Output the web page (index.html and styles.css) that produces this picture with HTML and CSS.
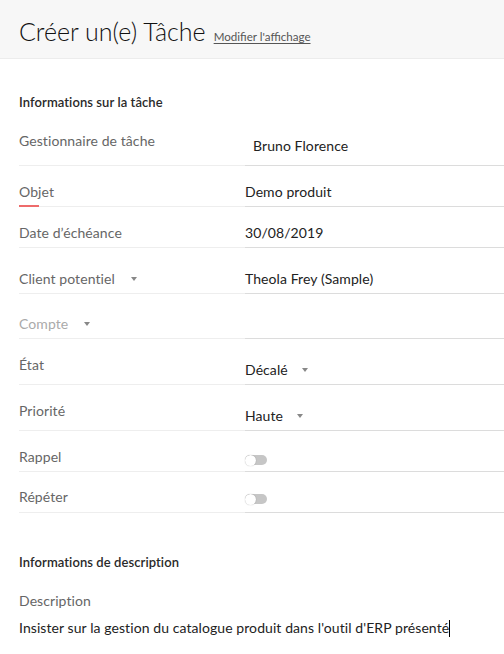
FILE: index.html
```html
<!DOCTYPE html>
<html lang="fr">
<head>
<meta charset="utf-8">
<title>Créer un(e) Tâche</title>
<link rel="stylesheet" href="styles.css">
</head>
<body>
<header class="topbar">
  <h1 class="title">Créer un(e) Tâche</h1>
  <a class="layout-link" href="#">Modifier l'affichage</a>
</header>
<main class="form">
  <h2 class="section-title section-title--first">Informations sur la tâche</h2>
  <div class="fields">
    <div class="row row--45">
      <div class="label label--high">Gestionnaire de tâche</div>
      <div class="value value--indent value--high">Bruno Florence</div>
    </div>
    <div class="row">
      <div class="label label--active"><span class="label-text">Objet</span></div>
      <div class="value">Demo produit</div>
    </div>
    <div class="row">
      <div class="label">Date d’échéance</div>
      <div class="value">30/08/2019</div>
    </div>
    <div class="row row--46">
      <div class="label">Client potentiel <span class="caret caret--label"></span></div>
      <div class="value">Theola Frey (Sample)</div>
    </div>
    <div class="row row--45">
      <div class="label label--muted">Compte <span class="caret caret--label"></span></div>
      <div class="value"></div>
    </div>
    <div class="row row--46">
      <div class="label label--mid">État</div>
      <div class="value">Décalé <span class="caret"></span></div>
    </div>
    <div class="row row--46">
      <div class="label label--mid">Priorité</div>
      <div class="value">Haute <span class="caret"></span></div>
    </div>
    <div class="row">
      <div class="label">Rappel</div>
      <div class="value value--toggle"><span class="toggle"></span></div>
    </div>
    <div class="row">
      <div class="label label--t2">Répéter</div>
      <div class="value value--toggle2"><span class="toggle"></span></div>
    </div>
  </div>
  <h2 class="section-title section-title--second">Informations de description</h2>
  <div class="desc-label">Description</div>
  <div class="desc-text">Insister sur la gestion du catalogue produit dans l'outil d'ERP présenté<span class="cursor"></span></div>
</main>
</body>
</html>
```
FILE: styles.css
```css
* { box-sizing: border-box; }
html, body { margin: 0; padding: 0; background: #fff; }
body {
  font-family: "Lato", "Open Sans", sans-serif;
  font-size: 14px;
  letter-spacing: 0.08px;
  color: #222;
  width: 504px;
  overflow: hidden;
}
.topbar {
  height: 59px;
  background: #f7f7f7;
  border-bottom: 1px solid #ececec;
  padding: 16px 0 0 19px;
  display: flex;
  align-items: baseline;
  gap: 8px;
}
.title {
  margin: 0;
  font-size: 25px;
  line-height: 30px;
  font-weight: 300;
  letter-spacing: 0;
  color: #111;
}
.layout-link {
  font-size: 11.6px;
  letter-spacing: 0;
  color: #555;
  text-decoration: underline;
  text-underline-offset: 2px;
}
.form { padding-left: 19px; }
.section-title {
  margin: 0;
  font-size: 13px;
  line-height: 18px;
  font-weight: 600;
  color: #2a2a2a;
}
.section-title--first { padding-top: 34px; padding-bottom: 10px; }
.section-title--second { padding-top: 40px; }
.fields { display: flex; flex-direction: column; }
.row {
  display: grid;
  grid-template-columns: 226px 1fr;
  height: 41px;
}
.row--45 { height: 45px; }
.row--46 { height: 46px; }
.label, .value {
  display: flex;
  align-items: flex-end;
  padding-bottom: 5px;
  line-height: 18px;
}
.label {
  color: #666;
  border-bottom: 1px solid #eeeeee;
  position: relative;
}
.value {
  color: #222;
  border-bottom: 1px solid #dcdcdc;
}
.label--high { padding-bottom: 15px; }
.label--mid { padding-bottom: 10px; }
.label--t2 { padding-bottom: 6px; }
.value--indent { padding-left: 8px; }
.value--high { padding-bottom: 10px; }
.value--toggle { padding-bottom: 6px; }
.value--toggle2 { padding-bottom: 8px; }
.label--muted { color: #aaa; }
.label--active::after {
  content: "";
  position: absolute;
  left: 0;
  bottom: -1px;
  width: 20px;
  height: 2px;
  background: #ee6b6b;
}
.caret {
  display: inline-block;
  width: 0;
  height: 0;
  border-left: 3.5px solid transparent;
  border-right: 3.5px solid transparent;
  border-top: 4px solid #888;
  margin-left: 14px;
  align-self: flex-end;
  margin-bottom: 7px;
}
.caret--label { margin-left: 16px; }
.toggle {
  display: inline-block;
  position: relative;
  width: 22px;
  height: 10px;
  border-radius: 5px;
  background: #c6c6c6;
}
.toggle::before {
  content: "";
  position: absolute;
  left: 0;
  top: -0.5px;
  width: 11px;
  height: 11px;
  border-radius: 50%;
  background: #fff;
  box-shadow: 0 0 1px rgba(0,0,0,0.35);
}
.desc-label {
  margin-top: 21px;
  line-height: 18px;
  color: #666;
}
.desc-text {
  margin-top: 9px;
  line-height: 18px;
  color: #222;
}
.cursor {
  display: inline-block;
  width: 1px;
  height: 17px;
  background: #000;
  vertical-align: -4px;
}
```
